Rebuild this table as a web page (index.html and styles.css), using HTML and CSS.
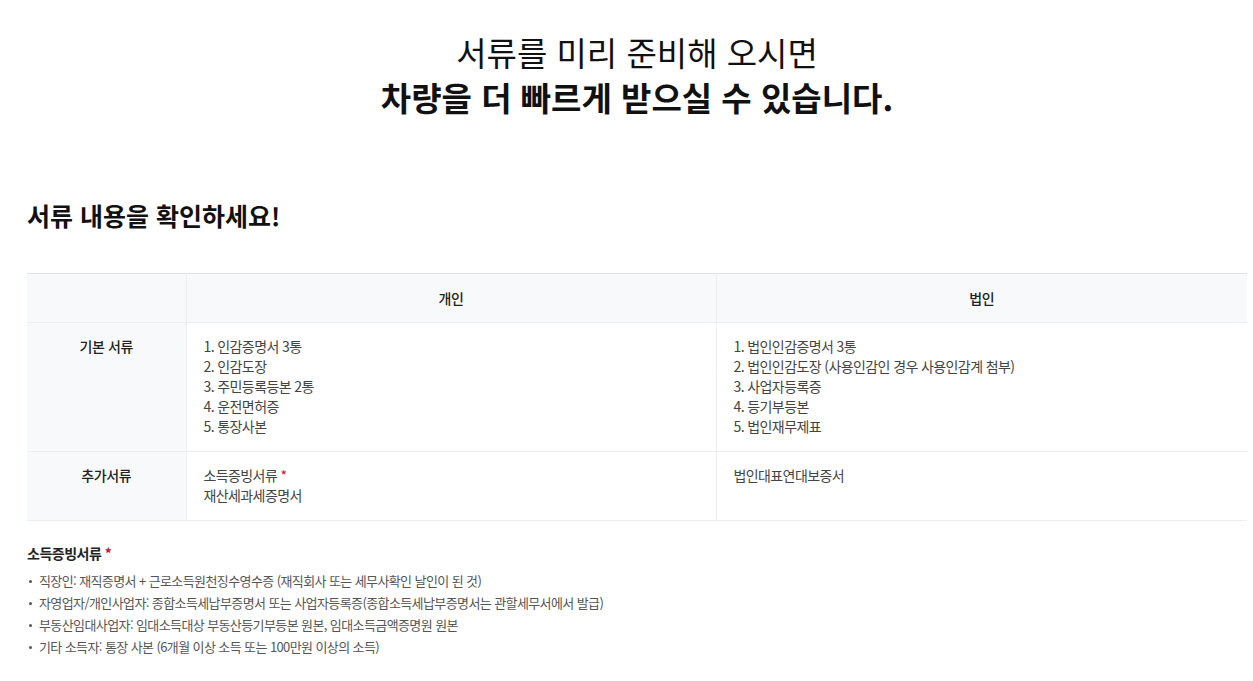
FILE: index.html
```html
<!DOCTYPE html>
<html lang="ko">
<head>
<meta charset="utf-8">
<link rel="stylesheet" href="styles.css">
</head>
<body>
<div class="page">
  <h1 class="hero">
    <span class="hero-light">서류를 미리 준비해 오시면</span>
    <span class="hero-bold">차량을 더 빠르게 받으실 수 있습니다.</span>
  </h1>

  <h2 class="section-title">서류 내용을 확인하세요!</h2>

  <table class="docs">
    <colgroup>
      <col class="c-label">
      <col class="c-person">
      <col class="c-corp">
    </colgroup>
    <thead>
      <tr>
        <th class="label"></th>
        <th>개인</th>
        <th>법인</th>
      </tr>
    </thead>
    <tbody>
      <tr>
        <th class="label">기본 서류</th>
        <td>1. 인감증명서 3통<br>2. 인감도장<br>3. 주민등록등본 2통<br>4. 운전면허증<br>5. 통장사본</td>
        <td>1. 법인인감증명서 3통<br>2. 법인인감도장 (사용인감인 경우 사용인감계 첨부)<br>3. 사업자등록증<br>4. 등기부등본<br>5. 법인재무제표</td>
      </tr>
      <tr>
        <th class="label">추가서류</th>
        <td>소득증빙서류 <span class="req">*</span><br>재산세과세증명서</td>
        <td>법인대표연대보증서</td>
      </tr>
    </tbody>
  </table>

  <div class="notes">
    <h3 class="notes-title">소득증빙서류 <span class="req">*</span></h3>
    <ul class="notes-list">
      <li>직장인: 재직증명서 + 근로소득원천징수영수증 (재직회사 또는 세무사확인 날인이 된 것)</li>
      <li>자영업자/개인사업자: 종합소득세납부증명서 또는 사업자등록증(종합소득세납부증명서는 관할세무서에서 발급)</li>
      <li>부동산임대사업자: 임대소득대상 부동산등기부등본 원본, 임대소득금액증명원 원본</li>
      <li>기타 소득자: 통장 사본 (6개월 이상 소득 또는 100만원 이상의 소득)</li>
    </ul>
  </div>
</div>
</body>
</html>
```

FILE: styles.css
```css
* { box-sizing: border-box; }
html, body { margin: 0; padding: 0; background: #fff; }
body {
  font-family: "Noto Sans CJK KR", "Noto Sans", sans-serif;
  color: #222;
}
.page {
  width: 1220px;
  margin-left: 27px;
  padding-top: 30px;
}
.hero {
  margin: 0;
  text-align: center;
  font-size: 33px;
  line-height: 45px;
  letter-spacing: 0;
  color: #111;
}
.hero span { display: block; }
.hero-light { font-weight: 400; }
.hero-bold { font-weight: 700; }

.section-title {
  margin: 78px 0 0;
  font-size: 25px;
  line-height: 34px;
  font-weight: 700;
  letter-spacing: 0;
  color: #111;
}

.docs {
  margin-top: 41px;
  width: 1220px;
  border-collapse: collapse;
  table-layout: fixed;
  border-top: 1px solid #dee2e6;
  font-size: 14px;
  line-height: 20px;
}
.c-label { width: 159px; }
.c-person { width: 530px; }
.c-corp { width: 531px; }
.docs th, .docs td {
  border-bottom: 1px solid #eceef0;
  vertical-align: top;
}
.docs thead th {
  height: 49px;
  vertical-align: middle;
  background: #f8f9fa;
  font-weight: 500;
  color: #222;
  text-align: center;
  padding: 0;
  letter-spacing: -0.3px;
}
.docs th + th, .docs td { border-left: 1px solid #eceef0; }
.docs tbody th.label {
  background: #f8f9fa;
  font-weight: 500;
  text-align: center;
  padding: 13px 0 15px;
  color: #222;
  letter-spacing: -0.4px;
}
.docs tbody td {
  padding: 13px 17px 15px;
  color: #444;
  letter-spacing: -0.6px;
}
.req { color: #c8102e; }

.notes { margin-top: 22px; }
.notes-title {
  margin: 0;
  font-size: 14px;
  line-height: 20px;
  font-weight: 700;
  color: #222;
  letter-spacing: -0.5px;
}
.notes-list {
  list-style: none;
  margin: 7px 0 0;
  padding: 0;
  font-size: 13px;
  line-height: 22px;
  color: #555;
  letter-spacing: -0.6px;
}
.notes-list li {
  position: relative;
  padding-left: 12px;
}
.notes-list li::before {
  content: "";
  position: absolute;
  left: 2px;
  top: 10px;
  width: 3px;
  height: 3px;
  border-radius: 50%;
  background: #555;
}
```
